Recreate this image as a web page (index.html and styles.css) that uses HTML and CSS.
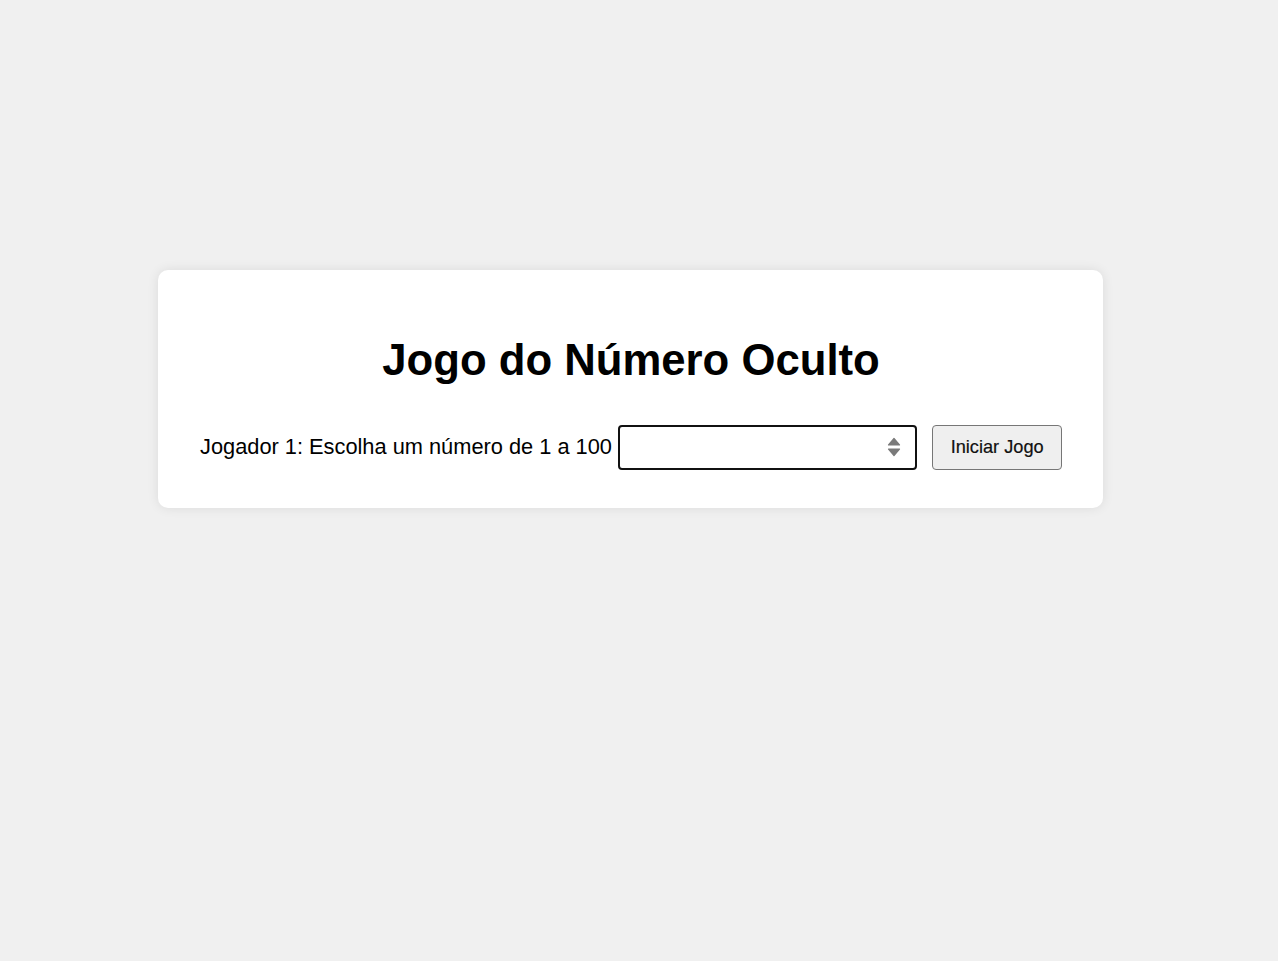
FILE: index.html
```html
<!DOCTYPE html>
<html lang="pt">
<head>
<meta charset="utf-8">
<title>Jogo do Número Oculto</title>
<link rel="stylesheet" href="styles.css">
</head>
<body>
<main class="page">
  <section class="card">
    <h1 class="title">Jogo do Número Oculto</h1>
    <div class="row">
      <label class="label" for="num">Jogador 1: Escolha um número de 1 a 100</label>
      <div class="field">
        <input class="input" id="num" type="number" min="1" max="100">
        <svg class="spin" width="14" height="20" viewBox="0 0 14 20" aria-hidden="true">
          <path d="M7 1.5 L12.5 8 H1.5 Z" fill="#7a7a7a" stroke="#7a7a7a" stroke-width="1.2" stroke-linejoin="round"/>
          <path d="M7 18.5 L12.5 12 H1.5 Z" fill="#7a7a7a" stroke="#7a7a7a" stroke-width="1.2" stroke-linejoin="round"/>
        </svg>
      </div>
      <button class="btn" type="button">Iniciar Jogo</button>
    </div>
  </section>
</main>
</body>
</html>
```
FILE: styles.css
```css
* { box-sizing: border-box; }
html, body {
  margin: 0;
  padding: 0;
  background: #f0f0f0;
  font-family: "Liberation Sans", Arial, sans-serif;
  color: #000;
}
.page {
  display: flex;
  justify-content: center;
  padding: 270px 17px 0 0;
  min-height: 961px;
}
.card {
  width: 945px;
  height: 238px;
  background: #fff;
  border-radius: 10px;
  box-shadow: 0 0 12px rgba(0, 0, 0, 0.09);
  padding: 65px 41px 0 42px;
  display: flex;
  flex-direction: column;
  align-items: center;
}
.title {
  margin: 0;
  font-size: 43.7px;
  font-weight: bold;
  line-height: 50px;
  text-align: center;
}
.row {
  margin-top: 40px;
  display: flex;
  align-items: center;
  width: 100%;
}
.label {
  font-size: 21.8px;
  line-height: 25px;
  margin: 0 6px 2px 0;
  white-space: nowrap;
}
.field {
  position: relative;
  width: 300px;
  height: 45px;
}
.input {
  width: 100%;
  height: 100%;
  border: 2px solid #111;
  border-radius: 4px;
  background: #fff;
  font: inherit;
  font-size: 21.6px;
  padding: 0 40px 0 8px;
  outline: none;
  -moz-appearance: textfield;
}
.input::-webkit-outer-spin-button,
.input::-webkit-inner-spin-button {
  -webkit-appearance: none;
  margin: 0;
}
.spin {
  position: absolute;
  right: 16px;
  top: 12px;
}
.btn {
  margin-left: 15px;
  width: 130px;
  height: 45px;
  background: #efefef;
  border: 1px solid #767676;
  border-radius: 4px;
  font-family: "Liberation Sans", Arial, sans-serif;
  font-size: 18.2px;
  color: #111;
  padding: 0;
  -webkit-text-stroke: 0.2px #111;
}
```
